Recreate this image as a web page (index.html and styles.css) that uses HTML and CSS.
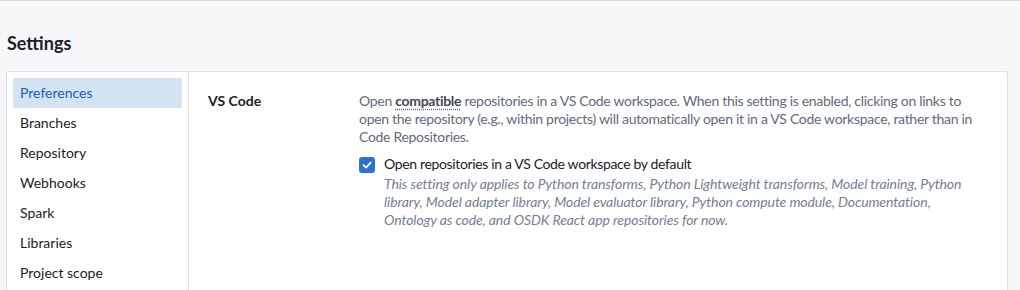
FILE: index.html
```html
<!DOCTYPE html>
<html lang="en">
    <head>
        <meta charset="UTF-8" />
        <title>Settings</title>
        <link rel="stylesheet" href="styles.css">
    </head>
    <body>
        <div class="page">
            <h1>Settings</h1>

            <div class="card">
                <!-- Меню разделов -->
                <nav class="side-nav">
                    <div class="nav-item active">Preferences</div>
                    <div class="nav-item">Branches</div>
                    <div class="nav-item">Repository</div>
                    <div class="nav-item">Webhooks</div>
                    <div class="nav-item">Spark</div>
                    <div class="nav-item">Libraries</div>
                    <div class="nav-item">Project scope</div>
                </nav>

                <!-- Содержимое раздела -->
                <div class="content">
                    <div class="setting-row">
                        <div class="setting-name">VS Code</div>
                        <div class="setting-body">
                            <p class="setting-desc">Open <b class="hint">compatible</b> repositories in a VS Code workspace. When this setting is enabled, clicking on links to open the repository (e.g., within projects) will automatically open it in a VS Code workspace, rather than in Code Repositories.</p>
                            <label class="check">
                                <span class="box">
                                    <svg width="12" height="12" viewBox="0 0 12 12"><path d="M2.5 6.2 L5 8.6 L9.6 3.6" fill="none" stroke="white" stroke-width="1.8" stroke-linecap="round" stroke-linejoin="round"/></svg>
                                </span>
                                <span class="check-text">
                                    <span class="check-label">Open repositories in a VS Code workspace by default</span>
                                    <span class="check-help">This setting only applies to Python transforms, Python Lightweight transforms, Model training, Python library, Model adapter library, Model evaluator library, Python compute module, Documentation, Ontology as code, and OSDK React app repositories for now.</span>
                                </span>
                            </label>
                        </div>
                    </div>
                </div>
            </div>
        </div>
    </body>
</html>
```

FILE: styles.css
```css
* {
    margin: 0;
    padding: 0;
    box-sizing: border-box;
    font-family: 'Lato', 'Liberation Sans', sans-serif;
}

body {
    background-color: #f6f7f9;
    border-top: 1px solid #d3d8de;
    height: 290px;
    overflow: hidden;
}

.page {
    padding: 0 12px 0 6px;
}

/* Заголовок */
h1 {
    margin: 31px 0 0 1px;
    height: 39px;
    font-size: 18px;
    font-weight: 700;
    color: #1c2127;
}

/* Карточка настроек */
.card {
    display: flex;
    background-color: white;
    border: 1px solid #dcdfe3;
    border-bottom: none;
    border-radius: 3px 3px 0 0;
    height: 219px;
    overflow: hidden;
}

.side-nav {
    width: 182px;
    padding: 6px;
    border-right: 1px solid #dcdfe3;
    display: flex;
    flex-direction: column;
}
.nav-item {
    height: 30px;
    line-height: 30px;
    padding-left: 7px;
    font-size: 14px;
    color: #1c2127;
    border-radius: 2px;
}
.nav-item.active {
    background-color: #d3e3f3;
    color: #215db0;
}

.content {
    flex: 1;
    padding: 20px 19px;
}
.setting-row {
    display: flex;
}
.setting-name {
    width: 151px;
    flex-shrink: 0;
    font-size: 14px;
    font-weight: 700;
    line-height: 18px;
    color: #1c2127;
}
.setting-body {
    flex: 1;
    padding-right: 10px;
}
.setting-desc {
    font-size: 14px;
    line-height: 18px;
    letter-spacing: -0.3px;
    color: #5f6b7c;
}
.hint {
    font-weight: 700;
    color: #404854;
    text-decoration: underline dotted #5f6b7c;
    text-underline-offset: 3px;
}

/* Чекбокс */
.check {
    display: flex;
    gap: 9px;
    margin-top: 9px;
}
.box {
    width: 16px;
    height: 16px;
    margin-top: 2px;
    flex-shrink: 0;
    background-color: #2d72d2;
    border-radius: 3px;
    display: flex;
    align-items: center;
    justify-content: center;
}
.check-text {
    display: flex;
    flex-direction: column;
    font-size: 14px;
    line-height: 18px;
}
.check-label {
    color: #1c2127;
    letter-spacing: -0.35px;
}
.check-help {
    font-style: italic;
    color: #738091;
    letter-spacing: -0.1px;
    margin-top: 2px;
}
```
